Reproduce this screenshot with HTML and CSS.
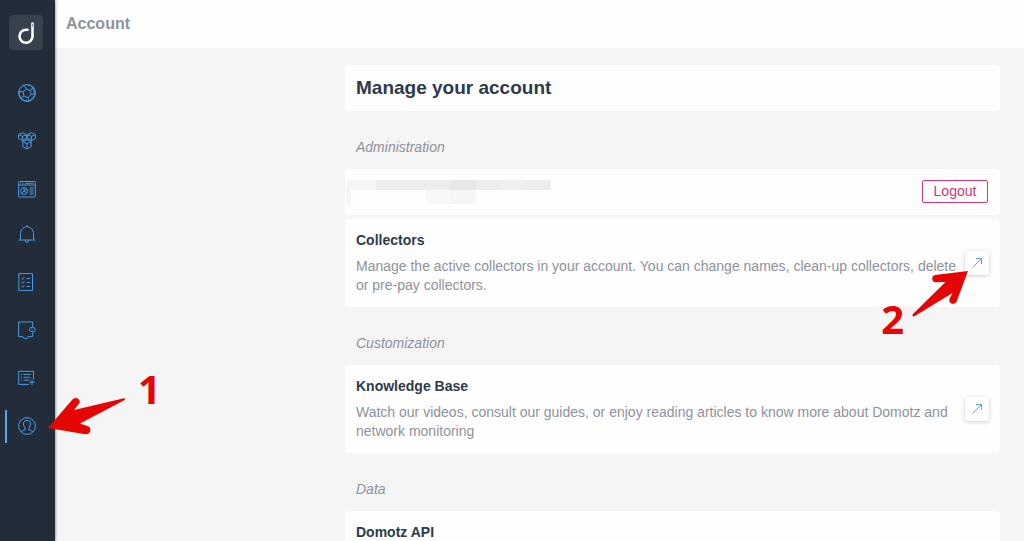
FILE: index.html
```html
<!DOCTYPE html>
<html lang="en">

<head>
    <meta charset="UTF-8"/>
    <meta name="viewport" content="width=device-width, initial-scale=1.0"/>
    <title>Account</title>
    <link rel="stylesheet" href="styles.css">
</head>

<body>
<aside class="sidebar">
    <a class="logo" href="#" aria-label="Home">
        <svg width="34" height="35" viewBox="0 0 34 35">
            <path d="M23.500 8.500v12.700a6.500 6.500 0 1 1-6.500-6.500h1.500" fill="none" stroke="#fff" stroke-width="2.600" stroke-linecap="round"/>
            <path d="M23.500 9v3" stroke="#9298a1" stroke-width="1"/>
        </svg>
    </a>
    <nav>
        <ul class="menu">
            <li>
                <a href="#" aria-label="Networks">
                    <svg class="icon" viewBox="0 0 18 18">
                        <circle cx="9" cy="9" r="8.400"/>
                        <path d="M5 1.600Q8 3 8.500 5L12 6.500l1 4-3 3-4-1.500L5 8l3.500-3M12 6.500l3.500-3M13 10.500l4.400-1M10 13.500l1 3.700M6 12l-3.500 2.300M5 8L.8 7M9 .6q4 1 6.500 3-.5 4 1.900 5.900M17.400 9.500q-2 5-6.400 7.700M2.500 14.300q5 3.500 8.500 2.900M.8 7q.5 4 1.700 7.300"/>
                    </svg>
                </a>
            </li>
            <li>
                <a href="#" aria-label="Devices">
                    <svg class="icon" viewBox="0 0 18 18">
                        <path d="M4.500.8L8.400 2.600v4L4.500 8.500.6 6.600v-4zM.6 2.600l3.900 1.800 3.900-1.800M4.500 4.400v4.100"/>
                        <path d="M13.500.8l3.900 1.800v4l-3.900 1.900-3.900-1.900v-4zM9.600 2.600l3.900 1.800 3.900-1.800M13.500 4.400v4.100"/>
                        <path d="M9 7.600l4.200 2v5L9 17l-4.200-2.400v-5zM4.800 9.600L9 11.700l4.200-2.100M9 11.700V17"/>
                    </svg>
                </a>
            </li>
            <li>
                <a href="#" aria-label="Dashboard">
                    <svg class="icon" viewBox="0 0 18 18">
                        <rect x=".6" y="1.500" width="16.800" height="15.500" rx="1"/>
                        <path d="M.6 5h16.800M2.500 3.300h1M4.500 3.300h1M7 3.300h8.500M11.500 8h4M11.500 10h4M11.500 12h4M11.500 14h4"/>
                        <circle cx="6" cy="11" r="3.500"/>
                        <path d="M6 7.500V11l2.800 2M6 11l-2.500 2.300M6 11l2.600-2"/>
                    </svg>
                </a>
            </li>
        </ul>
        <ul class="menu">
            <li>
                <a href="#" aria-label="Alerts">
                    <svg class="icon" viewBox="0 0 18 18">
                        <path d="M2.500 14.500V8.500C2.500 5 5 2.200 9 1.500c4 .7 6.500 3.500 6.500 7v6M.5 15h17M9 0v1.500M7.200 15.200q0 2.200 1.800 2.200t1.800-2.200"/>
                    </svg>
                </a>
            </li>
            <li>
                <a href="#" aria-label="Tasks">
                    <svg class="icon" viewBox="0 0 18 18">
                        <path d="M.8.600h13.700v17H.8zM8.500 5.500H12M8.500 9.500H12M8.500 13.500H12M3.300 5.200l1.200 1.100L6.500 4M3.300 9.200l1.200 1.100L6.500 8M3.300 13.200l1.200 1.100 2-2.300"/>
                    </svg>
                </a>
            </li>
            <li>
                <a href="#" aria-label="Integrations">
                    <svg class="icon" viewBox="0 0 18 18">
                        <path d="M.7 1h14v5.200q-3.200 0-3.200 2.300t3.200 2.300v4.900H10q-.4 2-2.500 2T5 15.700H.7zM13.500 8.500h1M14.700 6.200q2.400 0 2.400 2.300t-2.400 2.300"/>
                    </svg>
                </a>
            </li>
            <li>
                <a href="#" aria-label="Add report">
                    <svg class="icon" viewBox="0 0 18 18">
                        <path d="M11 15.400H.7V2.300h14.800v8M3 5.500h1M5.500 5.500h7M3 8.300h1M5.500 8.300h7M3 11.100h1M5.500 11.100h6M14 10.500v5.500M11.200 13.300h5.600"/>
                    </svg>
                </a>
            </li>
            <li class="active">
                <a href="#" aria-label="Account">
                    <svg class="icon" viewBox="0 0 18 18">
                        <circle cx="9" cy="9" r="8.400"/>
                        <path d="M3.200 15q.8-1.500 4-2.200.2-1.300-.9-2.800Q5.200 8 5.600 5.700 6.500 3.300 9 3.300t3.400 2.400q.4 2.300-.7 4.300-1.100 1.500-.9 2.800 3.200.700 4 2.200"/>
                    </svg>
                </a>
                <svg class="arrow-account" width="78" height="38" viewBox="0 0 78 38" aria-hidden="true">
                    <path d="M0 31L24 3q2.500-3 5.500-1.500T31.500 6L26 13 76 1.300q2 .3.600 1.600L32 26.500l8 2.800q3 1.500 2.300 4.700-1 3.500-5 3.300z"/>
                </svg>
                <span class="step step-account">1</span>
            </li>
        </ul>
    </nav>
</aside>
<div class="page">
    <header class="topbar">Account</header>
    <main class="content">
        <h1 class="card title">Manage your account</h1>

        <h2 class="section">Administration</h2>
        <div class="card user">
            <!-- hidden user name and e-mail -->
            <svg class="redacted" width="205" height="24" viewBox="0 0 205 24" shape-rendering="crispEdges" aria-hidden="true">
                <path d="M0 0h30v10H5v14H0z" fill="#f5f5f6"/>
                <path d="M30 0h175v10H30z" fill="#ecedef"/>
                <path d="M105 0h25v10h-25z" fill="#e8e8ea"/>
                <path d="M155 0h25v10h-25z" fill="#eff0f2"/>
                <path d="M80 10h25v14H80z" fill="#f8f8f9"/>
                <path d="M105 10h25v14h-25z" fill="#f6f6f7"/>
            </svg>
            <button class="logout" type="button">Logout</button>
        </div>
        <div class="card row">
            <div class="text">
                <h3>Collectors</h3>
                <p>Manage the active collectors in your account. You can change names, clean-up collectors, delete or pre-pay collectors.</p>
            </div>
            <a class="open" href="#" aria-label="Open collectors">
                <svg width="12" height="12" viewBox="0 0 12 12"><path d="M1.500 10.500l9-9M5 1.500h5.500V7"/></svg>
            </a>
            <svg class="arrow-collectors" width="58" height="50" viewBox="0 0 58 50" aria-hidden="true">
                <path d="M56 2L44.700 32.500q-1.500 3-4.500 2.200t-3-4.200L40.500 24 2 47.500q-2 .2-1.500-2L33.500 13l-10 .300q-3-.500-3.300-3.300T23 6z"/>
            </svg>
            <span class="step step-collectors">2</span>
        </div>

        <h2 class="section">Customization</h2>
        <div class="card row">
            <div class="text">
                <h3>Knowledge Base</h3>
                <p>Watch our videos, consult our guides, or enjoy reading articles to know more about Domotz and network monitoring</p>
            </div>
            <a class="open" href="#" aria-label="Open knowledge base">
                <svg width="12" height="12" viewBox="0 0 12 12"><path d="M1.500 10.500l9-9M5 1.500h5.500V7"/></svg>
            </a>
        </div>

        <h2 class="section">Data</h2>
        <div class="card row">
            <div class="text">
                <h3>Domotz API</h3>
            </div>
        </div>
    </main>
</div>
</body>
</html>
```
FILE: styles.css
```css
* {
    box-sizing: border-box;
}

body {
    margin: 0;
    height: 100vh;
    overflow: hidden;
    display: flex;
    background: #f5f5f5;
    color: #2d3a4a;
    font-family: "Liberation Sans", Arial, sans-serif;
    font-size: 14px;
    line-height: 19px;
}

h1, h2, h3, p, ul {
    margin: 0;
    padding: 0;
}

.sidebar {
    flex: none;
    width: 55px;
    padding-top: 15px;
    background: #232d39;
    box-shadow: 0 0 3px rgba(0, 0, 0, 0.6);
    position: relative;
    z-index: 1;
}

.logo {
    display: block;
    width: 34px;
    height: 35px;
    margin: 0 0 20px 9px;
    border-radius: 4px;
    background: #38414e;
}

.menu {
    list-style: none;
    display: grid;
    gap: 3px;
}

.menu li {
    position: relative;
}

.menu a {
    display: flex;
    align-items: center;
    height: 45px;
    padding-left: 18px;
}

.menu .active::before {
    content: "";
    position: absolute;
    left: 5px;
    top: 7px;
    width: 2px;
    height: 33px;
    background: #55a9f0;
}

.icon {
    width: 18px;
    height: 18px;
    fill: none;
    stroke: #479ce4;
    stroke-width: 1;
}

.page {
    flex: 1;
    min-width: 0;
}

.topbar {
    height: 48px;
    padding: 14px 11px;
    background: #fefefe;
    color: #8f929c;
    font-size: 16px;
    font-weight: bold;
}

.content {
    max-width: 679px;
    margin-left: auto;
    padding: 17px 24px 0 0;
}

.card {
    border-radius: 4px;
    background: #fefefe;
}

.title {
    padding: 12px 11px;
    font-size: 19px;
    line-height: 22px;
}

.section {
    padding: 27px 11px 12px;
    color: #8f929c;
    font-size: 14px;
    font-weight: normal;
    font-style: italic;
}

.user {
    display: flex;
    justify-content: space-between;
    padding: 11px 12px 11px 1px;
    margin-bottom: 4px;
}

.logout {
    width: 66px;
    height: 23px;
    padding: 0;
    border: 1px solid #cf3579;
    border-radius: 2px;
    background: none;
    color: #cf3579;
    font: inherit;
}

.row {
    display: flex;
    align-items: center;
    justify-content: space-between;
    gap: 4px;
    padding: 12px 11px;
    position: relative;
}

.row h3 {
    font-size: 14px;
}

.row p {
    margin-top: 7px;
    color: #8f929c;
}

.open {
    flex: none;
    display: grid;
    place-items: center;
    width: 24px;
    height: 24px;
    border-radius: 3px;
    background: #fff;
    box-shadow: 0 1px 4px rgba(0, 0, 0, 0.2);
}

.open path {
    fill: none;
    stroke: #55a9f0;
}

/* numbered steps over the page */
.arrow-account,
.arrow-collectors {
    position: absolute;
    fill: #e60505;
}

.arrow-account {
    left: 48px;
    top: -6px;
}

.arrow-collectors {
    right: 30px;
    top: 50px;
}

.step {
    position: absolute;
    color: #e60505;
    font: bold 40px/40px "Open Sans", sans-serif;
}

.step-account {
    left: 138px;
    top: -34px;
}

.step-collectors {
    right: 96px;
    top: 80px;
}
```
